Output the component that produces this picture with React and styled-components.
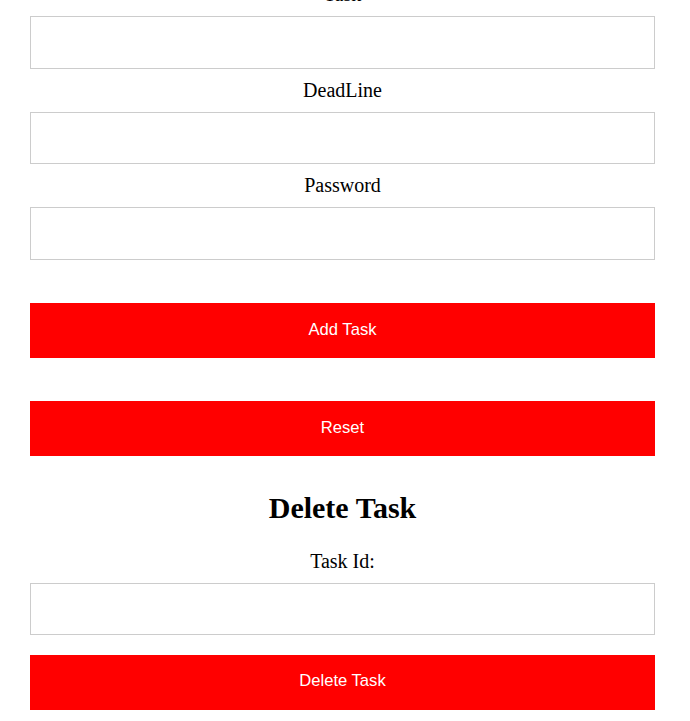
import styled, { createGlobalStyle } from "styled-components";

const GlobalStyle = createGlobalStyle`
    html, body {
        margin: 0;
        padding: 0;
        background: #fff;
        overflow: hidden;
    }
    body {
        font-family: "Liberation Serif", "Times New Roman", serif;
        color: #000;
    }
`;

// page is shown scrolled: the top of the form sits above the viewport
const Page = styled("main")`
    display: flex;
    flex-direction: column;
    width: 625px;
    margin: -27px 0 0 30px;
    text-align: center;
`;

const Form = styled("form")`
    display: flex;
    flex-direction: column;
`;

const Label = styled("label")`
    display: block;
    font-size: 20px;
    line-height: 23px;
    margin: ${(p) => (p.$top ? `${p.$top}px` : "10px")} 0 10px;
`;

const Input = styled("input")`
    box-sizing: border-box;
    width: 100%;
    height: 52.5px;
    margin: 0;
    padding: 0 12px;
    border: 1px solid #cccccc;
    background: #fff;
    font-size: 16px;
    outline: none;
`;

const Button = styled("button")`
    box-sizing: border-box;
    width: 100%;
    height: 55px;
    margin: ${(p) => p.$top}px 0 0;
    padding: 0 0 2px;
    border: none;
    background: #ff0000;
    color: #fff;
    font-family: "Liberation Sans", Arial, sans-serif;
    font-size: 16.6px;
    cursor: pointer;
`;

const Heading = styled("h2")`
    margin: 35px 0 0;
    font-size: 30px;
    font-weight: 700;
    line-height: 34.5px;
`;

const fields = ["Task", "DeadLine", "Password"];

export default function App() {
    return (
        <>
            <GlobalStyle />
            <Page>
                <Form onSubmit={(e) => e.preventDefault()}>
                    {fields.map((f) => (
                        <div key={f}>
                            <Label htmlFor={f}>{f}</Label>
                            <Input id={f} type={f === "Password" ? "password" : "text"} />
                        </div>
                    ))}
                    <Button type="submit" $top={43.5}>
                        Add Task
                    </Button>
                    <Button type="reset" $top={43}>
                        Reset
                    </Button>
                </Form>
                <Heading>Delete Task</Heading>
                <Form onSubmit={(e) => e.preventDefault()}>
                    <Label htmlFor="taskId" $top={24}>
                        Task Id:
                    </Label>
                    <Input id="taskId" type="text" />
                    <Button type="submit" $top={19.5}>
                        Delete Task
                    </Button>
                </Form>
            </Page>
        </>
    );
}
